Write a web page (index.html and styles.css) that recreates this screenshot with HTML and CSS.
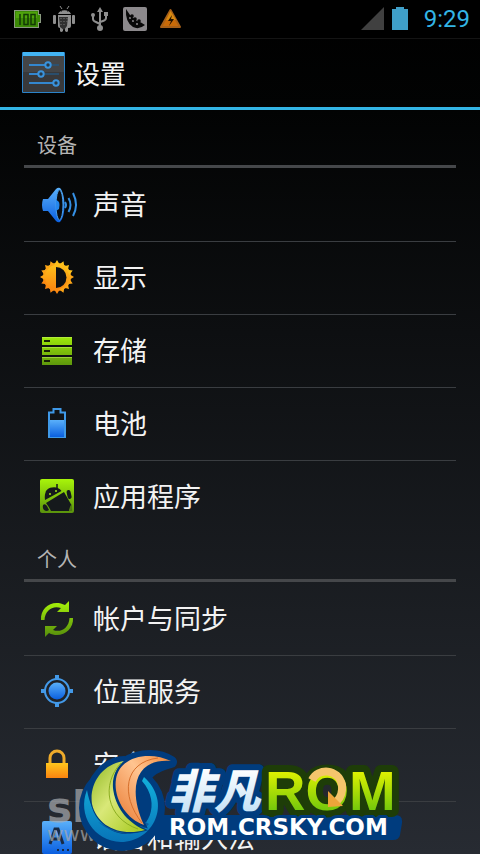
FILE: index.html
```html
<!DOCTYPE html>
<html lang="zh-CN">
<head>
<meta charset="utf-8">
<meta name="viewport" content="width=device-width, initial-scale=1">
<title>设置</title>
<link rel="stylesheet" href="styles.css">
</head>
<body>
<svg class="defs" width="0" height="0" aria-hidden="true">
  <defs>
    <linearGradient id="blue" x1="0" y1="0" x2="0" y2="1"><stop offset="0" stop-color="#5ab0fa"/><stop offset="1" stop-color="#0a5fe0"/></linearGradient>
    <linearGradient id="gold" x1="0" y1="0" x2="0" y2="1"><stop offset="0" stop-color="#ffc61c"/><stop offset="1" stop-color="#fb8410"/></linearGradient>
    <linearGradient id="lime" gradientUnits="userSpaceOnUse" x1="0" y1="2" x2="0" y2="36"><stop offset="0" stop-color="#a6f20a"/><stop offset="1" stop-color="#578f0c"/></linearGradient>
  </defs>
</svg>

<header class="status">
  <svg width="28" height="24" viewBox="0 0 28 24" aria-hidden="true">
    <path d="M0 3h25v4h2v9h-2v5H0z" fill="#8a9a80"/>
    <path d="M1 4h23v4h2v7h-2v5H1z" fill="#3c8a06"/>
    <path d="M2 5h21v6H2z" fill="#4fa30c"/>
    <path d="M6 7v11M10 7.500h4v10h-4zM17 7.500h4v10h-4z" fill="none" stroke="#123a04" stroke-width="1.500"/>
  </svg>
  <svg width="24" height="26" viewBox="0 0 24 26" aria-hidden="true">
    <path d="M5 8a7 6 0 0 1 13 0zM5 9h13v11q0 2-2 2h-1v3q-1 2-3 0v-3h-2v3q-2 2-3 0v-3q-2 0-2-2z" fill="#8e8e8e"/>
    <path d="M7 0l2 3M16 0l-2 3" stroke="#8e8e8e"/>
    <rect x="0" y="9" width="3" height="9" rx="1" fill="#8e8e8e"/><rect x="19" y="9" width="3" height="9" rx="1" fill="#8e8e8e"/>
    <path d="M6 11h9l-1 9-3 4-4-3z" fill="#303030"/>
    <path d="M8 12v9M11 12v9M14 12v6" stroke="#777" stroke-dasharray="1 2"/>
    <path d="M8 5h1M14 5h1" stroke="#111"/>
  </svg>
  <svg width="24" height="26" viewBox="0 0 24 26" aria-hidden="true">
    <path d="M12 4v18M5 10v3q0 2 3 3l4 2M18 9v3q0 2-3 3l-3 1" fill="none" stroke="#8e8e8e" stroke-width="2"/>
    <path d="M12 1l3 5H9z" fill="#8e8e8e"/><circle cx="12" cy="22" r="3" fill="#8e8e8e"/><circle cx="5" cy="9" r="2" fill="#8e8e8e"/><path d="M16 6h4v4h-4z" fill="#8e8e8e"/>
  </svg>
  <svg width="24" height="24" viewBox="0 0 24 24" aria-hidden="true">
    <rect width="24" height="24" rx="2" fill="#8c898c"/>
    <path d="M3 2l2 3C7 9 11 11 14 14q4 1 8 4-6 5-12 2Q2 15 3 2z" fill="#080808"/>
    <g fill="#8c898c"><circle cx="7" cy="11" r="1"/><circle cx="10" cy="14" r="1"/><circle cx="14" cy="17" r="1"/></g>
    <g fill="#080808"><circle cx="9" cy="9" r="1.800"/><circle cx="12" cy="12" r="1.800"/><circle cx="16" cy="14" r="1.800"/></g>
  </svg>
  <svg width="24" height="24" viewBox="0 0 24 24" aria-hidden="true">
    <path d="M12.500 3L22 20H3z" fill="#c96a08" stroke="#a86018" stroke-width="2" stroke-linejoin="round"/>
    <path d="M12.500 4L18 13H8z" fill="#d98a10"/><path d="M14 8l-4 6h3l-2 5 5-7h-3z" fill="#221100"/>
  </svg>
  <svg class="signal" width="24" height="24" viewBox="0 0 24 24" aria-hidden="true"><path d="M24 0v23H1z" fill="#404040"/></svg>
  <svg width="16" height="24" viewBox="0 0 16 24" aria-hidden="true"><path d="M0 2h4V0h8v2h4v21H0z" fill="#3f9fc8"/></svg>
  <time class="clock">9:29</time>
</header>

<div class="titlebar">
  <svg width="44" height="42" viewBox="0 0 44 42" aria-hidden="true">
    <rect width="43" height="41" rx="1" fill="#2b83c9"/><path d="M1 0h41v4H1z" fill="#43b4f3"/>
    <path d="M1 4h41v36H1z" fill="#434547"/><path d="M1 20h41v20H1z" fill="#38393b"/>
    <path d="M28 13h9M21 22h16" stroke="#26557d" stroke-width="1.500"/>
    <path d="M7 13h16M7 22h9M7 31h24" stroke="#3387cf" stroke-width="2"/>
    <g fill="#263947" stroke="#3a93dc" stroke-width="2"><circle cx="26" cy="13" r="2.700"/><circle cx="19" cy="22" r="2.700"/><circle cx="34" cy="31" r="2.700"/></g>
  </svg>
  <h1>设置</h1>
</div>

<main class="settings">
  <section>
    <h2>设备</h2>
    <ul>
      <li><a href="#sound">
        <svg class="icon" viewBox="0 0 36 36" aria-hidden="true">
          <path d="M4 13h5L17 3q2-2 4-1c6 6 6 29 0 34q-2 1-4-1L9 25H4q-2-6 0-12z" fill="url(#blue)"/>
          <ellipse cx="20.500" cy="19" rx="3.500" ry="15" fill="#0a0c0f" stroke="#46a0ef"/>
          <path d="M17 14q5 1 3 9l-3 2z" fill="#2487ee"/>
          <path d="M26 16q2 3 0 6M29.500 12q4 7 0 14M34 7q6 12 0 23" fill="none" stroke="#3590e4" stroke-width="2"/>
        </svg>声音</a></li>
      <li><a href="#display">
        <svg class="icon" viewBox="0 0 36 36" aria-hidden="true">
          <g fill="url(#gold)">
            <circle cx="18" cy="18" r="14"/>
            <path id="rays" d="M18 1l3 5h-6zM18 35l3-5h-6zM1 18l5-3v6zM35 18l-5-3v6z"/>
            <use href="#rays" transform="rotate(22.500 18 18)"/>
            <use href="#rays" transform="rotate(45 18 18)"/>
            <use href="#rays" transform="rotate(67.500 18 18)"/>
          </g>
          <path d="M17 8a10.500 10.500 0 0 1 0 21z" fill="#0e1012"/>
        </svg>显示</a></li>
      <li><a href="#storage">
        <svg class="icon" viewBox="0 0 36 36" aria-hidden="true">
          <path d="M3 5h30v8H3zM3 15h30v8H3zM3 25h30v8H3z" fill="url(#lime)"/>
          <path d="M3 5.500h30M3 15.500h30M3 25.500h30" stroke="#c5ef69" stroke-opacity=".5"/>
          <path d="M5 9h6M5 19h6M5 29h6" stroke="#172006" stroke-width="2"/>
        </svg>存储</a></li>
      <li><a href="#battery">
        <svg class="icon" viewBox="0 0 36 36" aria-hidden="true">
          <path d="M10 7.500h4.500V4h7v3.500H26V32H10z" fill="none" stroke="#3f99e8" stroke-width="2"/>
          <path d="M11 15h14v17H11z" fill="url(#blue)"/>
        </svg>电池</a></li>
      <li><a href="#apps">
        <svg class="icon" viewBox="0 0 36 36" aria-hidden="true">
          <rect x="1" y="1" width="34" height="34" rx="2" fill="url(#lime)"/>
          <g fill="#15191c">
            <path d="M6 22C5 14 8 10 13 9.500q6-1 9.500 3.500z"/>
            <path d="M7 25L25 14l8 14v4q-1 1-3 1H12q-2-4-5-8z"/>
            <path d="M4 27q2-2 4 1l2 4q-1 1-3 1-4-1-3-6z"/><rect x="28" y="12" width="4" height="9" rx="2" transform="rotate(-12 30 16)"/>
            <path d="M7 13l3 2M18 6v5" stroke="#15191c" stroke-width="1.500"/>
          </g>
          <circle cx="11" cy="16" r="1" fill="#9fe21b"/><circle cx="17" cy="13" r="1" fill="#9fe21b"/>
          <path d="M30 33q0-5 3-7v5q0 2-3 2z" fill="#527c13"/>
        </svg>应用程序</a></li>
    </ul>
  </section>
  <section>
    <h2>个人</h2>
    <ul>
      <li><a href="#sync">
        <svg class="icon" viewBox="0 0 36 36" aria-hidden="true">
          <path fill="url(#lime)" d="M2 20C1 7 14-1 26 5l4-4v11H18l4-4C14 5 6 10 5.500 20zM34 18c1 13-13 21-24 15l-4 4V26h12l-4 4c8 3 16-2 16.500-12z"/>
        </svg>帐户与同步</a></li>
      <li><a href="#location">
        <svg class="icon" viewBox="0 0 36 36" aria-hidden="true">
          <circle cx="18" cy="18" r="8.500" fill="url(#blue)"/>
          <circle cx="18" cy="18" r="12" fill="none" stroke="#4399e8" stroke-width="2"/>
          <path d="M18 2v4M18 30v4M2 18h4M30 18h4" stroke="#4399e8" stroke-width="4"/>
        </svg>位置服务</a></li>
      <li><a href="#security">
        <svg class="icon" viewBox="0 0 36 36" aria-hidden="true">
          <path d="M11 18v-6a7 7 0 0 1 14 0v6" fill="none" stroke="#efab2a" stroke-width="3"/>
          <path d="M7 17h22v15H7z" fill="url(#gold)"/>
        </svg>安全</a></li>
      <li><a href="#language">
        <svg class="icon" viewBox="0 0 36 36" aria-hidden="true">
          <rect x="3" y="2" width="30" height="33" rx="2" fill="url(#blue)"/>
          <path d="M11 25l5-15h3l5 15M13 20h9" fill="none" stroke="#172a45" stroke-width="3"/>
          <path d="M18 31h2M23 31h2M28 31h2" stroke="#172a45" stroke-width="2"/>
        </svg>语言和输入法</a></li>
    </ul>
  </section>
</main>

<div class="watermark">
  <span class="watermark-name">sh</span>
  <span class="watermark-url">www.</span>
</div>

<svg class="brand" width="340" height="114" viewBox="70 740 340 114" role="img" aria-label="非凡ROM">
  <defs>
    <linearGradient id="ice" x1="0" y1="0" x2="0" y2="1"><stop offset=".2" stop-color="#fff"/><stop offset="1" stop-color="#b9dcf4"/></linearGradient>
    <linearGradient id="rom" gradientUnits="userSpaceOnUse" x1="0" y1="768" x2="0" y2="812"><stop offset="0" stop-color="#e9f500"/><stop offset="1" stop-color="#6fc60c"/></linearGradient>
    <linearGradient id="leaf" x1="0" y1="0" x2="1" y2="1"><stop offset="0" stop-color="#8fb822"/><stop offset=".45" stop-color="#d9e878"/><stop offset="1" stop-color="#a4c81a"/></linearGradient>
    <linearGradient id="flame" x1="1" y1="0" x2="0" y2="1"><stop offset="0" stop-color="#f0883a"/><stop offset=".4" stop-color="#ffc490"/><stop offset="1" stop-color="#e87830"/></linearGradient>
    <linearGradient id="sea" x1="0" y1="0" x2="0" y2="1"><stop offset="0" stop-color="#12b0dc"/><stop offset="1" stop-color="#0874b8"/></linearGradient>
  </defs>
  <g fill="#003c7e" stroke="#003c7e" stroke-linejoin="round">
    <circle cx="122" cy="808" r="43" stroke="none"/>
    <path stroke-width="12" d="M171 762C158 753 128 752 116 774L124 762C108 762 90 780 92 800L140 790Q142 769 171 762z"/>
    <path stroke="none" d="M155 815h240q8 0 7 8l-2 12q-1 5-7 5H155z"/>
  </g>
  <path fill="url(#sea)" d="M87 790C77 815 94 841 121 842 153 842 173 803 144 777L142 781C162 804 148 832 126 834 106 834 91 814 87 790z"/>
  <path fill="#0a5ea4" d="M98 822q14 12 32 12 12-1 19-10-5-3-7-3 0 9-16 9-14 0-28-8z"/>
  <path fill="url(#leaf)" stroke="#003c7e" stroke-width="2" paint-order="stroke" d="M124 761C102 764 89 784 92 804 97 826 120 837 145 830 126 822 115 806 113 788 112 776 117 767 124 761z"/>
  <path d="M121 763C101 784 106 818 138 829" fill="none" stroke="#8cae20" stroke-width="1"/>
  <path fill="url(#flame)" stroke="#003c7e" stroke-width="4" paint-order="stroke" d="M171 761C151 751 120 755 116 779 113 798 126 819 144 825 134 804 133 783 141 772 147 763 158 760 171 761z"/>
  <path d="M158 758C124 762 120 795 142 823" fill="none" stroke="#d7702c" stroke-width="1"/>
  <text class="brand-cn" x="168" y="808">非凡</text>
  <text class="brand-rom" x="265" y="810">ROM</text>
  <path d="M312 780C318 768 338 768 342 785q1 10-5 16" fill="none" stroke="#f5c56c" stroke-width="8"/>
  <path d="M328 791l15 15-15 1z" fill="#eda53a"/>
  <text class="brand-url" x="169" y="835">ROM.CRSKY.COM</text>
</svg>
</body>
</html>
```

FILE: styles.css
```css
* {
  box-sizing: border-box;
}

body {
  position: relative;
  height: 100vh;
  margin: 0;
  overflow: hidden;
  background: linear-gradient(#000 0, #020303 110px, #272b32 100%);
  color: #f3f3f3;
  font-family: "Noto Sans CJK SC", "Noto Sans", sans-serif;
}

.defs {
  position: absolute;
}

.status {
  display: flex;
  align-items: center;
  gap: 11px;
  height: 38px;
  padding: 0 10px 0 14px;
  background: #000;
}

.signal {
  margin-left: auto;
}

.signal + svg {
  margin: 0 5px 0 -3px;
}

.clock {
  color: #33b5e5;
  font: 24px/40px Roboto, sans-serif;
}

.titlebar {
  display: flex;
  align-items: center;
  gap: 8px;
  height: 72px;
  padding: 0 22px;
  border-top: 1px solid #141414;
  border-bottom: 3px solid #33b5e5;
}

h1 {
  margin: 0;
  font-size: 26px;
  font-weight: 400;
  line-height: 36px;
}

.settings {
  padding: 9px 24px 0;
}

h2 {
  height: 49px;
  margin: 0;
  padding: 10px 13px 0;
  border-bottom: 3px solid #45474a;
  color: #b4b4b4;
  font-size: 20px;
  font-weight: 400;
  line-height: 32px;
}

ul {
  margin: 0;
  padding: 0;
  list-style: none;
}

li + li {
  border-top: 1px solid #3a3d41;
}

li a {
  display: flex;
  align-items: center;
  gap: 18px;
  height: 73px;
  padding: 0 15px 2px;
  color: inherit;
  font-size: 27px;
  line-height: 40px;
  text-decoration: none;
}

li + li a {
  height: 72px;
}

.icon {
  flex: none;
  width: 36px;
  height: 36px;
  overflow: visible;
}

.watermark {
  position: absolute;
  bottom: 8px;
  left: 47px;
  color: #a8abaf;
  font-family: "DejaVu Sans", sans-serif;
  opacity: 0.7;
}

.watermark-name,
.watermark-url {
  display: block;
}

.watermark-name {
  font-size: 42px;
  font-weight: 700;
  line-height: 28px;
}

.watermark-url {
  font-size: 20px;
  line-height: 24px;
}

.brand {
  position: absolute;
  bottom: 0;
  left: 70px;
}

.brand text {
  paint-order: stroke;
  stroke-linejoin: round;
}

.brand-cn {
  fill: url(#ice);
  stroke: #003c7e;
  stroke-width: 12px;
  font-size: 46px;
  font-style: italic;
  font-weight: 900;
}

.brand-rom {
  fill: url(#rom);
  stroke: #1e3d08;
  stroke-width: 14px;
  font-family: "Liberation Sans", sans-serif;
  font-size: 56px;
  font-weight: 700;
}

.brand-url {
  fill: #fff;
  stroke: #003c7e;
  stroke-width: 6px;
  font-family: "DejaVu Sans", sans-serif;
  font-size: 23px;
  font-weight: 700;
}
```
